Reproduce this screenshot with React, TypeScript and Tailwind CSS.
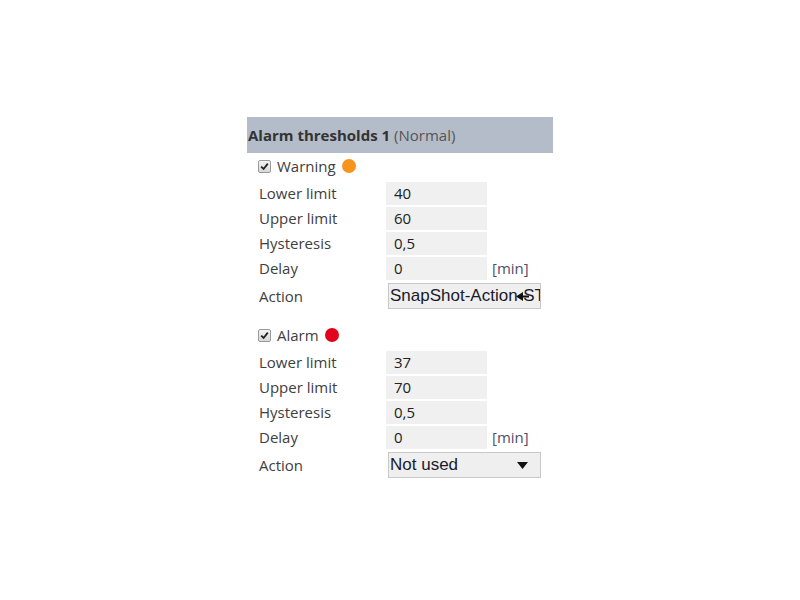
import React from "react";

type Row = { label: string; value: string; unit?: string };

const warningRows: Row[] = [
  { label: "Lower limit", value: "40" },
  { label: "Upper limit", value: "60" },
  { label: "Hysteresis", value: "0,5" },
  { label: "Delay", value: "0", unit: "[min]" },
];

const alarmRows: Row[] = [
  { label: "Lower limit", value: "37" },
  { label: "Upper limit", value: "70" },
  { label: "Hysteresis", value: "0,5" },
  { label: "Delay", value: "0", unit: "[min]" },
];

function CheckBox() {
  return (
    <div className="w-[13px] h-[13px] rounded-[2px] border border-[#9a9a9a] bg-gradient-to-b from-[#f4f4f4] to-[#d8d8d8] flex items-center justify-center">
      <svg width="9" height="9" viewBox="0 0 9 9">
        <path d="M1.2 4.6 L3.6 7 L7.8 1.6" fill="none" stroke="#222" strokeWidth="1.8" />
      </svg>
    </div>
  );
}

function Triangle() {
  return (
    <svg width="11" height="7" viewBox="0 0 11 7">
      <path d="M0 0 H11 L5.5 7 Z" fill="#111" />
    </svg>
  );
}

function Section({ title, dot, rows, action, actionCut }: { title: string; dot: string; rows: Row[]; action: string; actionCut?: boolean }) {
  return (
    <div>
      <div className="flex items-center h-[28px] pl-[11px] gap-[6px] pb-[2px]">
        <CheckBox />
        <span className="text-[15px] text-[#404040]">{title}</span>
        <span className={`w-[14px] h-[14px] rounded-full ${dot}`} />
      </div>
      {rows.map((r) => (
        <div key={r.label} className="flex items-center h-[25px]">
          <span className="w-[139px] pl-[12px] text-[15px] text-[#404040]">{r.label}</span>
          <div className="w-[101px] h-[23px] bg-[#f0f0f0] flex items-center pl-[8px] text-[15px] text-[#222]">{r.value}</div>
          {r.unit && <span className="ml-[5px] text-[15px] text-[#505068]">{r.unit}</span>}
        </div>
      ))}
      <div className="flex items-center h-[28px] mt-[1px]">
        <span className="w-[141px] pl-[12px] text-[15px] text-[#404040]">Action</span>
        <div className="relative w-[153px] h-[26px] bg-[#efefef] border border-[#c8c8c8] flex items-center pl-[1px] overflow-hidden">
          <span className="whitespace-nowrap text-[17px] text-[#1a1a2a] font-['Liberation_Sans',Arial,sans-serif]">{action}</span>
          {actionCut ? (
            <div className="absolute left-[127px] top-[8px]">
              <svg width="13" height="9" viewBox="0 0 13 9">
                <path d="M0 4.5 L7 0 L7 3.5 L13 3.5 L13 5.5 L7 5.5 L7 9 Z" fill="#111" />
              </svg>
            </div>
          ) : (
            <div className="absolute right-[12px] top-[9px]">
              <Triangle />
            </div>
          )}
        </div>
      </div>
    </div>
  );
}

export default function App() {
  return (
    <div className="w-[800px] h-[600px] bg-white font-['Open_Sans',sans-serif]">
      <div className="ml-[247px] pt-[117px] w-[306px]">
        <div className="h-[36px] bg-[#b3bcc8] flex items-center pl-[1px] text-[15px]">
          <span className="font-bold text-[#333]">Alarm thresholds 1</span>
          <span className="ml-[4px] text-[#555]">(Normal)</span>
        </div>
        <Section title="Warning" dot="bg-[#f7941d]" rows={warningRows} action="SnapShot-Action-ST" actionCut />
        <div className="h-[12px]" />
        <Section title="Alarm" dot="bg-[#e2001a]" rows={alarmRows} action="Not used" />
      </div>
    </div>
  );
}
